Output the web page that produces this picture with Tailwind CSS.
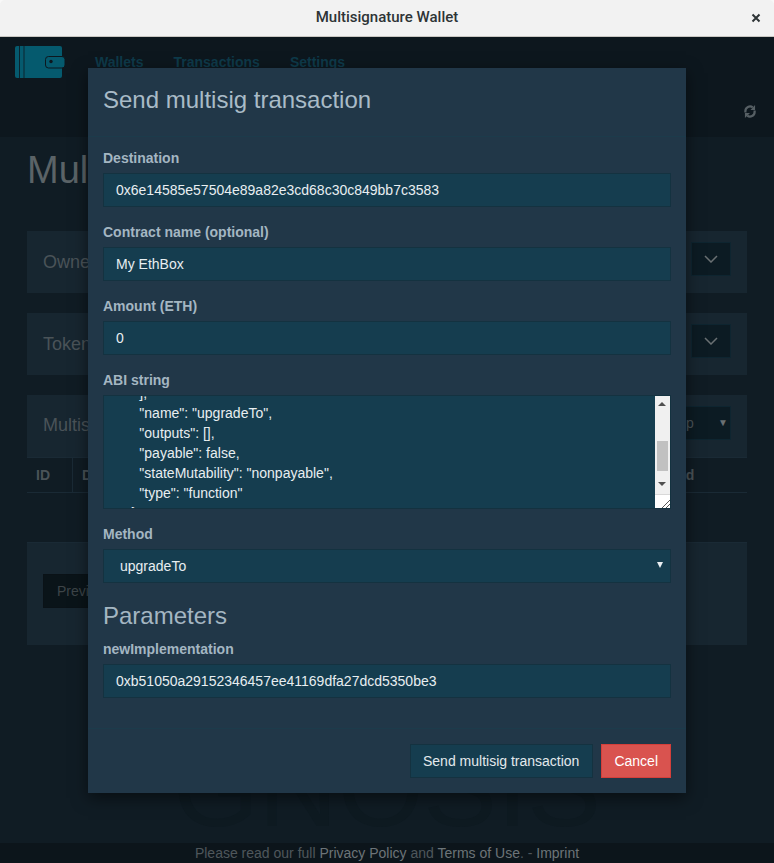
<!DOCTYPE html>
<html lang="en">
<head>
  <meta charset="UTF-8">
  <title>Multisignature Wallet</title>
  <script src="https://cdn.jsdelivr.net/npm/@tailwindcss/browser@4"></script>
</head>
<body class="h-[863px] w-[774px] overflow-hidden bg-[#f8f8f8] font-['Liberation_Sans',sans-serif] text-sm">

  <!-- Window title bar -->
  <div class="relative flex h-[37px] items-center justify-center rounded-t-[5px] border-b border-[#c9c7c2] bg-[#f2f2f2]">
    <span class="font-['Roboto',sans-serif] text-[15px] font-medium text-[#2e3436]">Multisignature Wallet</span>
    <svg class="absolute right-[13px] top-[13px]" width="10" height="10" viewBox="0 0 10 10"><path d="M1.500 1.500l7 7M8.500 1.500l-7 7" stroke="#2e3436" stroke-width="2"/></svg>
  </div>

  <!-- App behind the modal -->
  <div class="relative h-[826px] bg-[#101c24]">
    <nav class="relative flex h-[100px] bg-[#0d171e] pl-[15px]">
      <svg class="mt-[9px]" width="51" height="33" viewBox="0 0 51 33">
        <rect x="0" y="0" width="47" height="32" rx="2" fill="#055a6e"/>
        <path d="M4.500 0v32M9 0v32" stroke="#0d171e" stroke-width="0.8"/>
        <rect x="30.500" y="10.500" width="19.500" height="11.500" rx="3" fill="#055a6e" stroke="#0d171e"/>
        <circle cx="36" cy="15.500" r="1.700" fill="#0d171e"/>
      </svg>
      <div class="ml-[29px] flex gap-[30px] pt-[15px] font-bold text-[#0e3a4a]">
        <span>Wallets</span><span>Transactions</span><span>Settings</span>
      </div>
      <svg class="absolute right-[18px] top-[67px]" width="12" height="15" viewBox="0 0 13 15" fill="none" stroke="#565f64" stroke-width="2.400">
        <path d="M1.500 8.500V7a5 5 0 0 1 8-4"/>
        <path d="M11.500 6.500V8a5 5 0 0 1-8 4"/>
        <path d="M12 0.500v5.500H7z" fill="#565f64" stroke="none"/>
        <path d="M1 14.500V9h5.500z" fill="#565f64" stroke="none"/>
      </svg>
    </nav>

    <div class="px-[27px]">
      <h1 class="mt-[11px] h-[62px] text-[38px] leading-[44px] text-[#5b6367]">Multisig</h1>
      <div class="mt-[21px] flex h-[62px] justify-between bg-[#172630] px-[16px] pt-[11px] text-[18px] text-[#4a5358]">
        <span class="pt-[8px]">Owners</span>
        <span class="flex h-[34px] w-[40px] items-center justify-center border border-[#0e2530] bg-[#0c1b23]">
          <svg width="14" height="8" viewBox="0 0 14 8" fill="none" stroke="#6a7073" stroke-width="1.500"><path d="M1 1l6 6 6-6"/></svg>
        </span>
      </div>
      <div class="mt-[20px] flex h-[62px] justify-between bg-[#172630] px-[16px] pt-[11px] text-[18px] text-[#4a5358]">
        <span class="pt-[8px]">Tokens</span>
        <span class="flex h-[34px] w-[40px] items-center justify-center border border-[#0e2530] bg-[#0c1b23]">
          <svg width="14" height="8" viewBox="0 0 14 8" fill="none" stroke="#6a7073" stroke-width="1.500"><path d="M1 1l6 6 6-6"/></svg>
        </span>
      </div>
      <div class="mt-[20px] h-[250px] bg-[#172630]">
        <div class="flex h-[62px] justify-between px-[16px] pt-[11px] text-[18px] text-[#4a5358]">
          <span class="pt-[7px]">Multisig transactions</span>
          <span class="flex h-[34px] w-[90px] items-center justify-between border border-[#0e2530] bg-[#0c1b23] pl-[13px] pr-[2px] text-sm">
            <span>Group</span><span class="text-[10px] text-[#6a7073]">▼</span>
          </span>
        </div>
        <div class="flex h-[36px] items-center border-y border-[#1a2a35] bg-[#101c24] font-bold text-[#4a5358]">
          <span class="flex h-full w-[46px] items-center border-r border-[#1a2a35] pl-[9px]">ID</span>
          <span class="pl-[9px]">Destination</span>
          <span class="ml-[466px]">Confirmed</span>
        </div>
        <div class="h-[50px] border-b border-[#1a2a35] bg-[#101c24]"></div>
        <div class="ml-[16px] mt-[31px] flex h-[34px] w-[80px] items-center border border-[#0a1217] bg-[#0a1419] pl-[13px] text-[#3d4448]">Previous</div>
      </div>
    </div>

    <!-- Watermark -->
    <div class="absolute left-0 right-0 top-[696px] text-center text-[110px] leading-[110px] text-[#0e1a21]">GNOSIS</div>

    <footer class="absolute bottom-0 left-0 right-0 flex h-[20px] items-center justify-center bg-[#0c151b] text-[#4f575b]">
      <span>Please read our full <span class="text-[#6c7478]">Privacy Policy</span> and <span class="text-[#6c7478]">Terms of Use</span>. - <span class="text-[#6c7478]">Imprint</span></span>
    </footer>
  </div>

  <!-- Modal dialog -->
  <div class="absolute left-[88px] top-[68px] w-[598px] bg-[#213748] text-[#a4b6c2] shadow-[0_5px_15px_rgba(0,0,0,0.5)]">
    <div class="h-[69px] border-b border-[#1c3b4b] px-[15px] pt-[17px]">
      <h4 class="text-[24px] leading-[30px] text-[#a9bbc7]">Send multisig transaction</h4>
    </div>
    <div class="px-[15px] pb-[30px] pt-[11px]">
      <label class="block h-[25px] font-bold leading-[20px]">Destination</label>
      <div class="flex h-[34px] items-center border border-[#143240] bg-[#153d4f] px-[12px] text-[#e8eef1]">0x6e14585e57504e89a82e3cd68c30c849bb7c3583</div>

      <label class="mt-[15px] block h-[25px] font-bold leading-[20px]">Contract name (optional)</label>
      <div class="flex h-[34px] items-center border border-[#143240] bg-[#153d4f] px-[12px] text-[#e8eef1]">My EthBox</div>

      <label class="mt-[15px] block h-[25px] font-bold leading-[20px]">Amount (ETH)</label>
      <div class="flex h-[34px] items-center border border-[#143240] bg-[#153d4f] px-[12px] text-[#e8eef1]">0</div>

      <label class="mt-[15px] block h-[25px] font-bold leading-[20px]">ABI string</label>
      <div class="relative h-[114px] overflow-hidden border border-[#143240] bg-[#153d4f] px-[12px] text-[#e8eef1]">
        <div class="-mt-[13px] whitespace-pre leading-[20px]">      ],
      "name": "upgradeTo",
      "outputs": [],
      "payable": false,
      "stateMutability": "nonpayable",
      "type": "function"
    }</div>
        <!-- fake native scrollbar -->
        <div class="absolute bottom-0 right-0 top-0 flex w-[15px] flex-col bg-[#f0f0f0]">
          <div class="relative h-[98px]">
            <span class="absolute left-[3px] top-[6px] h-0 w-0 border-x-[4px] border-b-[4px] border-x-transparent border-b-[#505050]"></span>
            <span class="absolute left-[2px] top-[45px] h-[30px] w-[11px] bg-[#c1c1c1]"></span>
            <span class="absolute left-[3px] top-[86px] h-0 w-0 border-x-[4px] border-t-[4px] border-x-transparent border-t-[#505050]"></span>
          </div>
          <div class="relative flex-1 border-t border-[#d8d8d8] bg-white">
            <svg class="absolute bottom-0 right-0" width="10" height="10" viewBox="0 0 10 10" stroke="#555"><path d="M2 10L10 2M6 10l4-4"/></svg>
          </div>
        </div>
      </div>

      <label class="mt-[15px] block h-[25px] font-bold leading-[20px]">Method</label>
      <div class="relative flex h-[34px] items-center border border-[#143240] bg-[#153d4f] pl-[16px] text-[#e8eef1]">
        upgradeTo
        <span class="absolute right-[7px] top-[12px] h-0 w-0 border-x-[3px] border-t-[6px] border-x-transparent border-t-[#e8eef1]"></span>
      </div>

      <h3 class="mt-[19px] h-[37px] text-[24px] leading-[27px]">Parameters</h3>
      <label class="block h-[25px] font-bold leading-[20px]">newImplementation</label>
      <div class="flex h-[34px] items-center border border-[#143240] bg-[#153d4f] px-[12px] text-[#e8eef1]">0xb51050a29152346457ee41169dfa27dcd5350be3</div>
    </div>
    <div class="flex justify-end gap-[8px] border-t border-[#1c3b4b] p-[15px]">
      <span class="flex h-[34px] items-center border border-[#143240] bg-[#153d4f] pl-[12px] pr-[13px] text-[#e3e9ec]">Send multisig transaction</span>
      <span class="flex h-[34px] items-center border border-[#d43f3a] bg-[#d9534f] px-[12px] text-white">Cancel</span>
    </div>
  </div>

</body>
</html>
